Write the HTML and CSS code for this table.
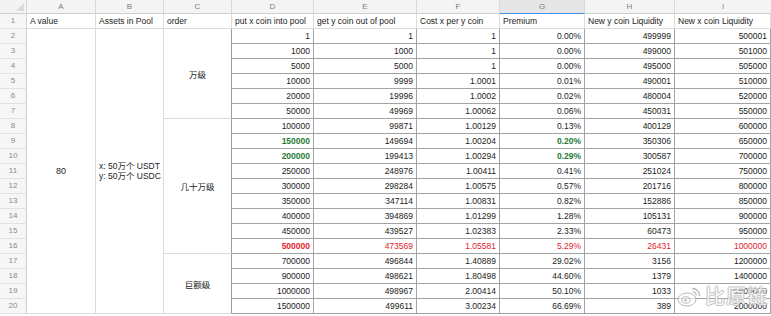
FILE: index.html
```html
<!DOCTYPE html>
<html lang="zh">
<head>
<meta charset="utf-8">
<title>Sheet</title>
<link rel="stylesheet" href="styles.css">
</head>
<body>
<div class="sheet">
  <div class="corner"></div>
  <div class="colh">A</div><div class="colh">B</div><div class="colh">C</div><div class="colh">D</div><div class="colh">E</div><div class="colh">F</div><div class="colh sel">G</div><div class="colh">H</div><div class="colh last">I</div>

  <div class="rowh">1</div>
  <div class="c t">A value</div><div class="c t">Assets in Pool</div><div class="c t">order</div><div class="c t">put x coin into pool</div><div class="c t">get y coin out of pool</div><div class="c t">Cost x per y coin</div><div class="c t">Premium</div><div class="c t">New y coin Liquidity</div><div class="c t">New x coin Liquidity</div>

  <div class="rowh">2</div>
  <div class="c mA">80</div>
  <div class="c mB"><span>x: 50万个 USDT</span><span>y: 50万个 USDC</span></div>
  <div class="c mC r6">万级</div>
  <div class="d">1</div><div class="d">1</div><div class="d">1</div><div class="d">0.00%</div><div class="d">499999</div><div class="d">500001</div>

  <div class="rowh">3</div>
  <div class="d">1000</div><div class="d">1000</div><div class="d">1</div><div class="d">0.00%</div><div class="d">499000</div><div class="d">501000</div>
  <div class="rowh">4</div>
  <div class="d">5000</div><div class="d">5000</div><div class="d">1</div><div class="d">0.00%</div><div class="d">495000</div><div class="d">505000</div>
  <div class="rowh">5</div>
  <div class="d">10000</div><div class="d">9999</div><div class="d">1.0001</div><div class="d">0.01%</div><div class="d">490001</div><div class="d">510000</div>
  <div class="rowh">6</div>
  <div class="d">20000</div><div class="d">19996</div><div class="d">1.0002</div><div class="d">0.02%</div><div class="d">480004</div><div class="d">520000</div>
  <div class="rowh">7</div>
  <div class="d">50000</div><div class="d">49969</div><div class="d">1.00062</div><div class="d">0.06%</div><div class="d">450031</div><div class="d">550000</div>

  <div class="rowh">8</div>
  <div class="c mC r9">几十万级</div>
  <div class="d">100000</div><div class="d">99871</div><div class="d">1.00129</div><div class="d">0.13%</div><div class="d">400129</div><div class="d">600000</div>
  <div class="rowh">9</div>
  <div class="d green">150000</div><div class="d">149694</div><div class="d">1.00204</div><div class="d green">0.20%</div><div class="d">350306</div><div class="d">650000</div>
  <div class="rowh">10</div>
  <div class="d green">200000</div><div class="d">199413</div><div class="d">1.00294</div><div class="d green">0.29%</div><div class="d">300587</div><div class="d">700000</div>
  <div class="rowh">11</div>
  <div class="d">250000</div><div class="d">248976</div><div class="d">1.00411</div><div class="d">0.41%</div><div class="d">251024</div><div class="d">750000</div>
  <div class="rowh">12</div>
  <div class="d">300000</div><div class="d">298284</div><div class="d">1.00575</div><div class="d">0.57%</div><div class="d">201716</div><div class="d">800000</div>
  <div class="rowh">13</div>
  <div class="d">350000</div><div class="d">347114</div><div class="d">1.00831</div><div class="d">0.82%</div><div class="d">152886</div><div class="d">850000</div>
  <div class="rowh">14</div>
  <div class="d">400000</div><div class="d">394869</div><div class="d">1.01299</div><div class="d">1.28%</div><div class="d">105131</div><div class="d">900000</div>
  <div class="rowh">15</div>
  <div class="d">450000</div><div class="d">439527</div><div class="d">1.02383</div><div class="d">2.33%</div><div class="d">60473</div><div class="d">950000</div>
  <div class="rowh">16</div>
  <div class="d red bold">500000</div><div class="d red">473569</div><div class="d red">1.05581</div><div class="d red">5.29%</div><div class="d red">26431</div><div class="d red">1000000</div>

  <div class="rowh">17</div>
  <div class="c mC r4">巨额级</div>
  <div class="d">700000</div><div class="d">496844</div><div class="d">1.40889</div><div class="d">29.02%</div><div class="d">3156</div><div class="d">1200000</div>
  <div class="rowh">18</div>
  <div class="d">900000</div><div class="d">498621</div><div class="d">1.80498</div><div class="d">44.60%</div><div class="d">1379</div><div class="d">1400000</div>
  <div class="rowh">19</div>
  <div class="d">1000000</div><div class="d">498967</div><div class="d">2.00414</div><div class="d">50.10%</div><div class="d">1033</div><div class="d">1500000</div>
  <div class="rowh">20</div>
  <div class="d">1500000</div><div class="d">499611</div><div class="d">3.00234</div><div class="d">66.69%</div><div class="d">389</div><div class="d">2000000</div>
</div>

<div class="watermark">
  <svg class="wb" width="26" height="24" viewBox="0 0 26 24">
    <ellipse cx="10" cy="15.5" rx="9" ry="6.5" fill="rgba(255,255,255,0.85)" stroke="#a8a8a8" stroke-width="1"/>
    <ellipse cx="9" cy="16" rx="4.2" ry="3.2" fill="none" stroke="#a8a8a8" stroke-width="1"/>
    <circle cx="8.5" cy="16.3" r="1.2" fill="#a8a8a8"/>
    <path d="M15 4.5 A7 7 0 0 1 22.5 12" fill="none" stroke="#a8a8a8" stroke-width="1.3"/>
    <path d="M15.5 7.8 A3.8 3.8 0 0 1 19.2 11.6" fill="none" stroke="#a8a8a8" stroke-width="1.2"/>
  </svg>
  <span class="wt">比原链</span>
</div>
</body>
</html>
```

FILE: styles.css
```css
html, body {
  margin: 0;
  padding: 0;
  background: #ffffff;
}

body {
  font-family: "Liberation Sans", Arial, "Noto Sans CJK SC", sans-serif;
  color: #1c1c1c;
  position: relative;
  width: 771px;
  height: 316px;
  overflow: hidden;
}

.sheet {
  display: grid;
  grid-template-columns: 27px 69px 68px 68px 82px 103px 83px 85px 90px 96px;
  grid-template-rows: 14px repeat(20, 15px);
  font-size: 8.5px;
}

.sheet > div {
  box-sizing: border-box;
  white-space: nowrap;
  overflow: hidden;
}

.corner {
  background: #f3f3f3;
  border-right: 1px solid #d6d6d6;
  border-bottom: 1px solid #d0d0d0;
  position: relative;
}

.corner::after {
  content: "";
  position: absolute;
  right: 2px;
  bottom: 2px;
  width: 0;
  height: 0;
  border-left: 8px solid transparent;
  border-bottom: 8px solid #d9d9d9;
}

.colh {
  background: #f4f4f4;
  color: #7d7d7d;
  text-align: center;
  line-height: 13px;
  font-size: 8px;
  border-right: 1px solid #dadada;
  border-bottom: 1px solid #d0d0d0;
}

.colh.sel {
  background: #e6e6e6;
  border-bottom: 1px solid #3d8ee8;
}

.colh.last {
  border-right: none;
}

.rowh {
  background: #f6f6f6;
  color: #8a8a8a;
  text-align: center;
  line-height: 14px;
  font-size: 8px;
  border-right: 1px solid #d0d0d0;
  border-bottom: 1px solid #e2e2e2;
}

.c {
  border-right: 1px solid #dcdcdc;
  border-bottom: 1px solid #dcdcdc;
  line-height: 14px;
  padding: 0 3px;
}

.t {
  text-align: left;
}

.mA {
  grid-row: span 19;
  display: flex;
  align-items: center;
  justify-content: center;
  font-size: 9px;
}

.mB {
  grid-row: span 19;
  display: flex;
  flex-direction: column;
  justify-content: center;
  line-height: 10px;
  font-size: 8.5px;
  padding-left: 3px;
}

.mC {
  display: flex;
  align-items: center;
  justify-content: center;
  font-size: 8.5px;
  font-family: "Noto Sans CJK SC", sans-serif;
  border-right: 1px solid #9c9c9c;
}

.r6 { grid-row: span 6; }
.r9 { grid-row: span 9; }
.r4 { grid-row: span 4; }

.d {
  text-align: right;
  padding: 0 3px 0 2px;
  line-height: 14px;
  border-right: 1px solid #a3a3a3;
  border-bottom: 1px solid #a3a3a3;
}

.green {
  color: #1f7a35;
  font-weight: bold;
}

.red {
  color: #e2222c;
}

.bold {
  font-weight: bold;
}

.watermark {
  position: absolute;
  left: 677px;
  top: 284px;
  display: flex;
  align-items: center;
  gap: 2px;
  opacity: 0.8;
}

.wt {
  font-family: "Noto Sans CJK SC", sans-serif;
  font-size: 20px;
  line-height: 24px;
  color: rgba(255, 255, 255, 0.92);
  letter-spacing: 1px;
  text-shadow: 1px 0 0 #b4b4b4, -1px 0 0 #b4b4b4, 0 1px 0 #b4b4b4, 0 -1px 0 #b4b4b4;
}
```
